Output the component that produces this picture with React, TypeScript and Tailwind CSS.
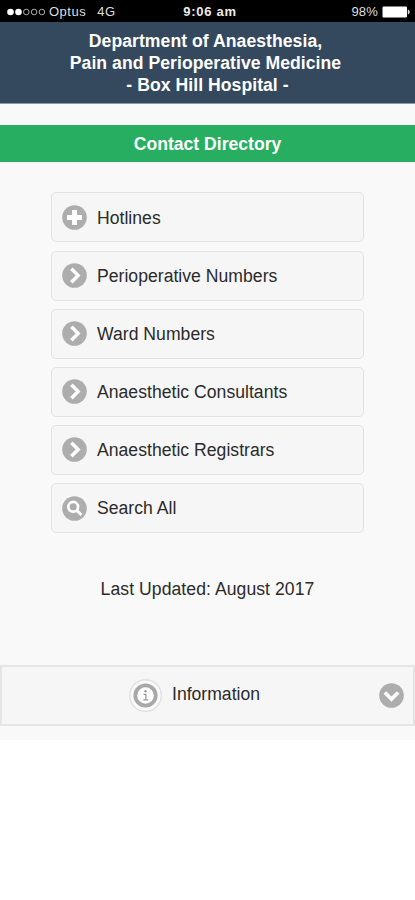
import React from "react";

type IconKind = "plus" | "right" | "search" | "down";

function DiscIcon({ kind }: { kind: IconKind }) {
  return (
    <svg className="block h-[25px] w-[25px] shrink-0" viewBox="0 0 25 25" fill="none">
      <circle cx="12.5" cy="12.5" r="12.3" fill="#adadad" />
      {kind === "plus" && <path d="M12.5 5v15M5 12.5h15" stroke="#fff" strokeWidth="5" />}
      {kind === "right" && <path d="M9.4 5.8l6.7 6.7-6.7 6.7" stroke="#fff" strokeWidth="3.5" />}
      {kind === "down" && <path d="M5.8 9.4l6.7 6.7 6.7-6.7" stroke="#fff" strokeWidth="3.6" />}
      {kind === "search" && (
        <>
          <circle cx="11.2" cy="10.8" r="4.9" stroke="#fff" strokeWidth="2.6" />
          <path d="M14.6 14.2l4.8 4.8" stroke="#fff" strokeWidth="3" />
        </>
      )}
    </svg>
  );
}

const items: { label: string; icon: IconKind }[] = [
  { label: "Hotlines", icon: "plus" },
  { label: "Perioperative Numbers", icon: "right" },
  { label: "Ward Numbers", icon: "right" },
  { label: "Anaesthetic Consultants", icon: "right" },
  { label: "Anaesthetic Registrars", icon: "right" },
  { label: "Search All", icon: "search" },
];

function StatusBar() {
  return (
    <div className="flex h-[22px] items-center bg-black pt-[2px] text-[13px] leading-5 text-[#dedede]">
      <div className="flex w-[140px] items-center pl-[7px]">
        <svg className="mr-[3px] block h-[8px] w-[39px]" viewBox="0 0 39 8" fill="none">
          <circle cx="3.5" cy="4" r="3.3" fill="#fff" />
          <circle cx="11.5" cy="4" r="3.3" fill="#fff" />
          <circle cx="19.3" cy="4" r="2.8" stroke="#aaa" />
          <circle cx="27.1" cy="4" r="2.8" stroke="#aaa" />
          <circle cx="34.9" cy="4" r="2.8" stroke="#aaa" />
        </svg>
        <span className="tracking-[0.5px]">Optus</span>
        <span className="ml-[11px] tracking-[0.5px]">4G</span>
      </div>
      <div className="flex-1 text-center text-[13px] font-bold tracking-[0.7px] text-[#ececec]">9:06 am</div>
      <div className="flex w-[135px] items-center justify-end pr-[5px]">
        <span className="text-[13px] tracking-[0.2px]">98%</span>
        <svg className="ml-[4px] block h-[12px] w-[28px]" viewBox="0 0 28 12">
          <rect x="0.5" y="0.5" width="24.5" height="11" rx="1.2" fill="#fff" />
          <path d="M25.8 3.2q2 1 2 2.8t-2 2.8z" fill="#ddd" />
        </svg>
      </div>
    </div>
  );
}

export default function App() {
  return (
    <div className="h-[900px] w-[415px] overflow-hidden bg-white font-['Liberation_Sans',Arial,sans-serif] text-[17.6px] text-[#2b2b2b]">
      <div className="h-[740px] bg-[#f9f9f9]">
        <StatusBar />
        <header className="h-[82px] border-b border-[#8d9aa6] bg-[#34495e] pr-[4px] pt-[8px] text-center font-bold leading-[22px] tracking-[0.05px] text-white">
          <div>Department of Anaesthesia,</div>
          <div>Pain and Perioperative Medicine</div>
          <div className="pl-[4px]">- Box Hill Hospital -</div>
        </header>
        <h1 className="mt-[21px] flex h-[37px] items-center justify-center bg-[#27ae60] font-bold leading-[22px] text-white">
          Contact Directory
        </h1>
        <nav className="ml-[51px] mt-[30px] flex w-[313px] flex-col gap-[8.15px] pt-[0.4px]">
          {items.map((item) => (
            <button
              key={item.label}
              className="flex h-[50px] items-center rounded-[5px] border-[1.5px] border-[#e2e2e2] bg-[#f6f6f6] pl-[10px] text-left"
            >
              <DiscIcon kind={item.icon} />
              <span className="ml-[10px] pt-[0.4px] leading-[22px] tracking-[0.02px]">{item.label}</span>
            </button>
          ))}
        </nav>
        <p className="mt-[45px] text-center leading-[22px] tracking-[0.06px]">Last Updated: August 2017</p>
        <div className="mt-[65px] flex h-[61px] items-center border-2 border-[#e5e5e5] bg-[#f6f6f6] pl-[127px] pr-[9px]">
          <svg className="block h-[34px] w-[34px]" viewBox="0 0 34 34" fill="none">
            <circle cx="16.5" cy="16.5" r="15.8" fill="#fafafa" stroke="#e0e0e0" strokeWidth="1.4" />
            <circle cx="16.5" cy="16.5" r="10.2" fill="#fff" stroke="#a8a8a8" strokeWidth="3.8" />
            <circle cx="16.5" cy="12.3" r="1.2" fill="#999" />
            <path d="M14.5 15.3h2.4v5.4M14.2 20.9h5" stroke="#999" strokeWidth="1.3" />
          </svg>
          <span className="ml-[9px] pb-[3px] leading-[22px]">Information</span>
          <span className="ml-auto">
            <DiscIcon kind="down" />
          </span>
        </div>
      </div>
    </div>
  );
}
